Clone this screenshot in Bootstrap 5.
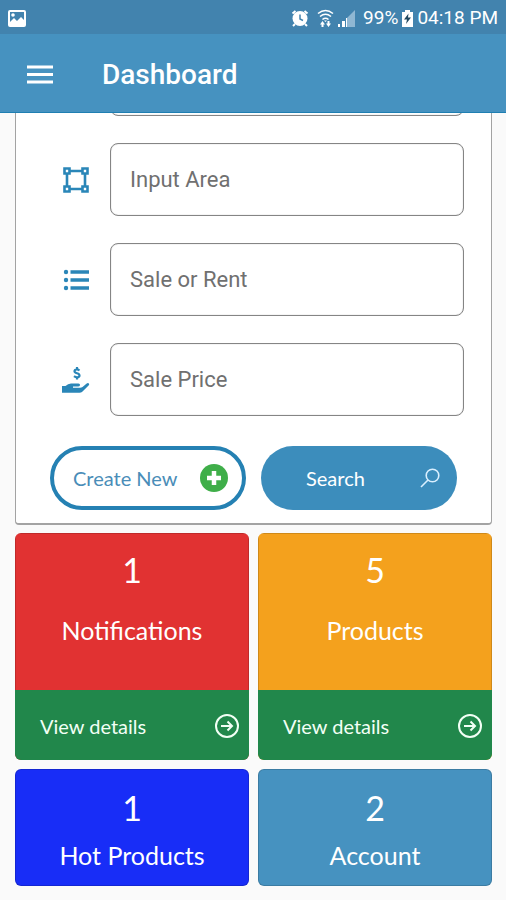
<!DOCTYPE html>
<html lang="en">
<head>
<meta charset="utf-8">
<meta name="viewport" content="width=device-width, initial-scale=1">
<title>Dashboard</title>
<link href="https://cdn.jsdelivr.net/npm/bootstrap@5.3.0/dist/css/bootstrap.min.css" rel="stylesheet">
<style>
  body { background: #fafafa; font-family: Lato, "Noto Sans", sans-serif; }
  .app-top { font-family: Roboto, sans-serif; }
  .status-strip { background: #4283ae; height: 34px; padding: 2px 8px 0; font-size: 19px; }
  .app-bar { background: #4692c0; height: 79px; padding: 4px 26px 0; border-bottom: 1px solid #1f7fb2; }
  .app-title { font-size: 28px; line-height: 32px; font-weight: 500; margin-left: 48px; }
  .page-body { padding: 0 14px 14px 15px; }
  .search-panel { margin-top: -71px; padding: 0 27px 13px 28px; border: 1px solid #a3a3a3; border-bottom-width: 2px; border-radius: 4px; background: #fff; }
  .field-stack { gap: 27px; }
  .field-icon { width: 40px; padding-left: 18px; box-sizing: content-box; color: #2a86b8; }
  .field-box { font-family: Roboto, sans-serif; font-size: 22px; height: 73px; padding: 0 19px; border: 1px solid #858585; border-radius: 8px; box-shadow: inset 0 0 1px #999; }
  .field-box::placeholder { color: #707070; opacity: 1; }
  .actions { grid-template-columns: 1fr 1fr; gap: 15px; padding: 0 7px 0 6px; margin-top: 30px; }
  .pill { height: 64px; font-size: 20px; border-radius: 32px; }
  .pill-outline, .pill-outline:hover { color: #4a8db8; border: 4px solid #2581b3; background: #fff; padding: 0 13px 0 19px; }
  .pill-solid, .pill-solid:hover { color: #fff; background: #3c8dbc; border: 0; padding: 0 17px 0 45px; }
  .tiles { grid-template-columns: 1fr 1fr; gap: 9px; margin-top: 8px; }
  .tile { border-radius: 6px; overflow: hidden; color: #fff; }
  .tile-main { height: 157px; padding-top: 14px; border: 1px solid rgba(0, 0, 0, .15); border-bottom: 0; }
  .tile-short { height: 117px; padding-top: 16px; border-bottom: 1px solid rgba(0, 0, 0, .15); }
  .tile-count { font-size: 34px; line-height: 44px; }
  .tile-name { font-size: 25px; line-height: 32px; margin-top: 22px; }
  .tile-short .tile-name { margin-top: 9px; }
  .tile-link { background: #21874b; color: #f2fff5; height: 70px; padding: 2px 9px 0 25px; font-size: 20px; }
  .c-red { background: #e13232; } .c-orange { background: #f4a11d; } .c-blue { background: #182df7; } .c-sky { background: #4692c0; }
</style>
<script src="https://cdn.jsdelivr.net/npm/bootstrap@5.3.0/dist/js/bootstrap.bundle.min.js"></script>
</head>
<body>
<header class="app-top sticky-top text-white">
  <div class="status-strip d-flex align-items-center">
    <svg width="18" height="17" viewBox="0 0 18 17" aria-hidden="true"><path fill="#fff" fill-rule="evenodd" d="M2 0h14q2 0 2 2v13q0 2-2 2H2q-2 0-2-2V2q0-2 2-2zm0 2v10l4-4 3 3 4-4 3 3V2z"/><circle cx="5" cy="5" r="1.800" fill="#fff"/></svg>
    <svg class="ms-auto" width="18" height="18" viewBox="0 0 18 18" aria-hidden="true"><path d="M1.500 4.500L4.500 2M16.500 4.500L13.500 2M4 15l-2 2M14 15l2 2" stroke="#fff" stroke-width="2"/><circle cx="9" cy="9.500" r="7.500" fill="#fff"/><path d="M9 5.500v4.500l3 1.500" stroke="#4283ae" stroke-width="1.500" fill="none"/></svg>
    <svg class="ms-2" width="17" height="18" viewBox="0 0 17 18" fill="none" stroke="#fff" stroke-width="1.600" aria-hidden="true"><path d="M1 4.500q7.500-6 15 0M3 7.500q5.500-4.500 11 0M5.500 10.500q3-2.500 6 0"/><path fill="#fff" stroke="none" d="M7 11.500h3L8.500 13zM3 15.500l2.500-3.500L8 15.500H6.500V18h-2v-2.500zM9 14.500l2.500 3.500 2.500-3.500h-1.500V12h-2v2.500z"/></svg>
    <svg class="ms-1" width="17" height="17" viewBox="0 0 17 17" aria-hidden="true"><path fill="#fff" d="M0 14h2v3H0zM4 11h3v6H4z"/><path fill="#fff" d="M8 8h1v9H8z"/><path fill="#8fb7d3" d="M9 8l8-8v17H9z"/></svg>
    <span class="ms-2">99%</span>
    <svg class="mx-1" width="11" height="17" viewBox="0 0 11 17" aria-hidden="true"><path fill="#fff" d="M3 0h5v2h3v15H0V2h3z"/><path fill="#23485f" d="M6.500 3.500L2 9.500h3L4 14l5-6.500H6z"/></svg>
    <span>04:18 PM</span>
  </div>
  <div class="app-bar d-flex align-items-center">
    <button type="button" class="btn p-0 border-0 d-flex" aria-label="Open menu">
      <svg width="28" height="20" viewBox="0 0 28 20" aria-hidden="true"><path d="M1 2h26M1 9.500h26M1 17h26" stroke="#fff" stroke-width="3"/></svg>
    </button>
    <h1 class="app-title mb-0">Dashboard</h1>
  </div>
</header>

<main class="page-body">
  <form class="search-panel">
    <div class="field-stack d-flex flex-column">
      <div class="d-flex align-items-center">
        <span class="field-icon"></span>
        <input class="field-box form-control w-auto flex-fill ms-2" type="text" aria-label="Property">
      </div>
      <div class="d-flex align-items-center">
        <label class="field-icon d-flex" for="area" aria-label="Input Area">
          <svg width="28" height="28" viewBox="0 0 28 28" fill="none" stroke="currentColor" stroke-width="2.600"><path d="M8 5h12M8 23h12M5 8v12M23 8v12"/><path d="M2.500 2.500h5v5h-5zM20.500 2.500h5v5h-5zM2.500 20.500h5v5h-5zM20.500 20.500h5v5h-5z"/></svg>
        </label>
        <input id="area" class="field-box form-control w-auto flex-fill ms-2" type="text" placeholder="Input Area">
      </div>
      <div class="d-flex align-items-center">
        <label class="field-icon d-flex" for="deal" aria-label="Sale or Rent">
          <svg width="28" height="22" viewBox="0 0 28 22"><path d="M8.500 3H27M8.500 11H27M8.500 19H27" stroke="currentColor" stroke-width="3.500"/><g fill="currentColor"><circle cx="4" cy="3" r="2.200"/><circle cx="4" cy="11" r="2.200"/><circle cx="4" cy="19" r="2.200"/></g></svg>
        </label>
        <input id="deal" class="field-box form-control w-auto flex-fill ms-2" type="text" placeholder="Sale or Rent">
      </div>
      <div class="d-flex align-items-center">
        <label class="field-icon d-flex" for="price" aria-label="Sale Price">
          <svg width="28" height="28" viewBox="0 0 28 28"><path fill="currentColor" d="M0 20h3.500q2.500-2.500 5.500-2.500h7.500q1.800.2 1.500 1.800-.3 1.200-2 1.200h-5v1.200h7q1.500 0 2.500-.8l4.200-3.500q1.300-.8 2.200 0 .8 1-.3 2L20 26q-1 .8-2.500.8H0z"/><path fill="none" stroke="currentColor" stroke-width="2.200" d="M17.500 4.500q-1.500-1.200-3-1-2 .2-2 1.800 0 1.300 2.500 2t2.500 2.200q0 1.700-2.300 1.800-1.700 0-3.200-1.200M15 1v2.500M15 11v2.500"/></svg>
        </label>
        <input id="price" class="field-box form-control w-auto flex-fill ms-2" type="text" placeholder="Sale Price">
      </div>
    </div>
    <div class="actions d-grid">
      <button type="button" class="pill pill-outline btn d-flex align-items-center justify-content-between">
        <span>Create New</span>
        <svg width="30" height="30" viewBox="0 0 30 30" aria-hidden="true"><circle cx="15" cy="15" r="14" fill="#3fae49"/><path d="M15 8v14M8 15h14" stroke="#fff" stroke-width="4.500"/></svg>
      </button>
      <button type="button" class="pill pill-solid btn d-flex align-items-center justify-content-between">
        <span>Search</span>
        <svg width="20" height="20" viewBox="0 0 20 20" fill="none" stroke="#d9efff" stroke-width="1.600" aria-hidden="true"><circle cx="12.500" cy="7.500" r="6.300"/><path d="M8 12l-7 7"/></svg>
      </button>
    </div>
  </form>

  <section class="tiles d-grid" aria-label="Summary">
    <div class="tile c-red">
      <div class="tile-main text-center"><div class="tile-count">1</div><div class="tile-name">Notifications</div></div>
      <a href="#" class="tile-link d-flex align-items-center justify-content-between text-decoration-none"><span>View details</span>
        <svg width="26" height="26" viewBox="0 0 26 26" fill="none" stroke="currentColor" stroke-width="2" aria-hidden="true"><circle cx="13" cy="13" r="11"/><path d="M7 13h11M13.500 8.500L18 13l-4.500 4.500"/></svg></a>
    </div>
    <div class="tile c-orange">
      <div class="tile-main text-center"><div class="tile-count">5</div><div class="tile-name">Products</div></div>
      <a href="#" class="tile-link d-flex align-items-center justify-content-between text-decoration-none"><span>View details</span>
        <svg width="26" height="26" viewBox="0 0 26 26" fill="none" stroke="currentColor" stroke-width="2" aria-hidden="true"><circle cx="13" cy="13" r="11"/><path d="M7 13h11M13.500 8.500L18 13l-4.500 4.500"/></svg></a>
    </div>
    <div class="tile tile-main tile-short c-blue text-center"><div class="tile-count">1</div><div class="tile-name">Hot Products</div></div>
    <div class="tile tile-main tile-short c-sky text-center"><div class="tile-count">2</div><div class="tile-name">Account</div></div>
  </section>
</main>
</body>
</html>
